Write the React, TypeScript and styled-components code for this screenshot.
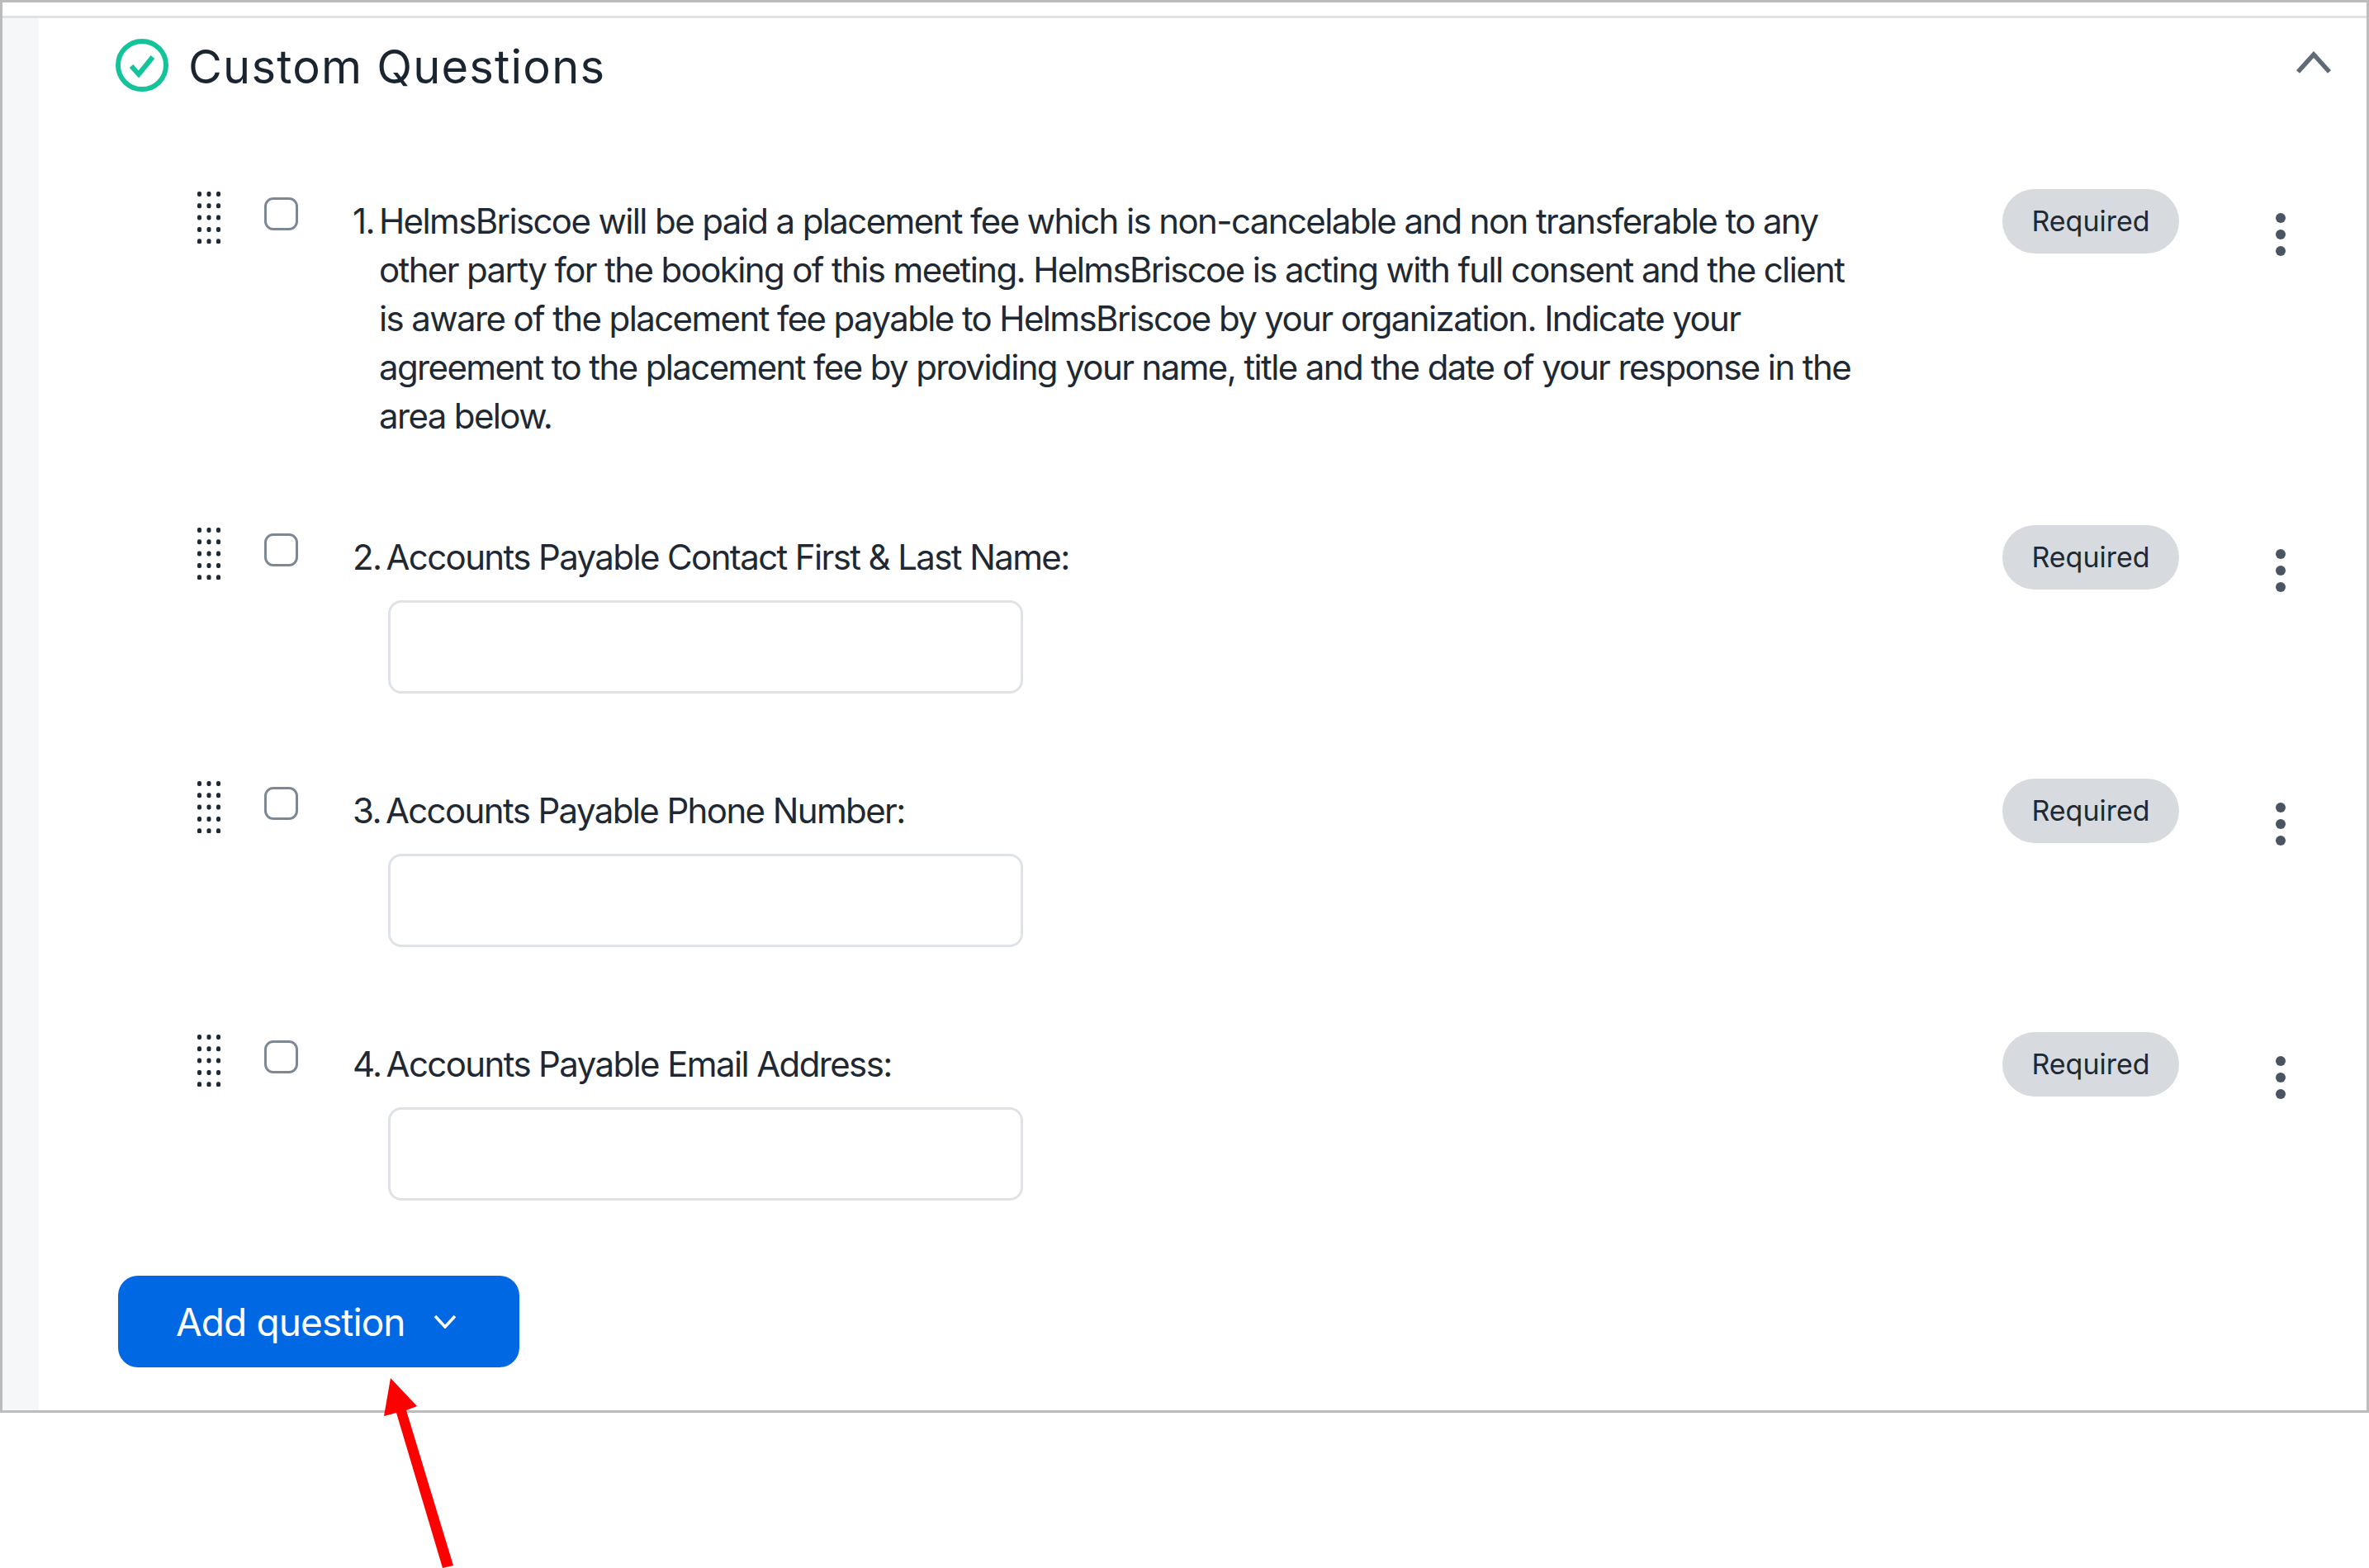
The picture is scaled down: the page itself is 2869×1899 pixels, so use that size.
import React from "react";
import styled, { createGlobalStyle } from "styled-components";

const GlobalStyle = createGlobalStyle`
  html, body {
    margin: 0;
    padding: 0;
    background: #ffffff;
  }
  body {
    font-family: Inter, "Liberation Sans", sans-serif;
  }
`;

const Page = styled.div`
  position: relative;
  width: 2869px;
  height: 1899px;
  overflow: hidden;
  background: #ffffff;
`;

const Frame = styled.section`
  box-sizing: border-box;
  width: 2869px;
  border: 3px solid #bcbcbc;
  background: #ffffff;
`;

const TopBand = styled.div`
  height: 16px;
  border-bottom: 3px solid #dfe3e7;
`;

const Body = styled.div`
  display: flex;
`;

const Strip = styled.div`
  width: 44px;
  flex: none;
  background: #f6f7f9;
`;

const Content = styled.div`
  flex: 1;
  min-width: 0;
  padding-bottom: 52px;
`;

const Header = styled.header`
  display: flex;
  align-items: flex-start;
  padding: 25px 44px 0 93px;
  height: 62px;
  margin-bottom: 120px;
`;

const Title = styled.h2`
  flex: 1;
  margin: 3px 0 0 24px;
  font-size: 56px;
  line-height: 62px;
  font-weight: 400;
  letter-spacing: 1.2px;
  color: #1b2530;
`;

const Chevron = styled.svg`
  width: 44px;
  height: 28px;
  margin-top: 15px;
  margin-right: -2px;
`;

const List = styled.div`
  display: flex;
  flex-direction: column;
  gap: 103px;
  padding-left: 192px;
  padding-right: 98px;
`;

const Row = styled.div`
  display: flex;
  align-items: flex-start;
`;

const Handle = styled.svg`
  width: 28px;
  height: 63px;
  flex: none;
  margin-top: 3px;
`;

const Check = styled.input`
  appearance: none;
  box-sizing: border-box;
  flex: none;
  width: 41px;
  height: 40px;
  margin: 10px 0 0 53px;
  border: 3px solid #7d8894;
  border-radius: 11px;
  background: #ffffff;
`;

const Question = styled.div`
  flex: 1;
  min-width: 0;
  margin: 9px 0 0 66px;
  font-size: 42px;
  line-height: 59px;
  letter-spacing: -1.62px;
  color: #1f2933;
`;

const Label = styled.div`
  display: flex;
  gap: 6px;
  width: 1840px;
`;

const Answer = styled.input`
  display: block;
  box-sizing: border-box;
  width: 769px;
  height: 113px;
  margin: 23px 0 0 43px;
  border: 3px solid #dfe3e7;
  border-radius: 16px;
  background: #ffffff;
`;

const Pill = styled.span`
  flex: none;
  box-sizing: border-box;
  width: 214px;
  height: 78px;
  border-radius: 39px;
  background: #d7dade;
  color: #1f2933;
  font-size: 34px;
  line-height: 78px;
  text-align: center;
`;

const Menu = styled.svg`
  flex: none;
  width: 12px;
  height: 52px;
  margin: 29px 0 0 117px;
`;

const AddButton = styled.button`
  display: flex;
  align-items: center;
  box-sizing: border-box;
  width: 486px;
  height: 111px;
  margin: 91px 0 0 96px;
  padding: 0 0 0 70px;
  border: none;
  border-radius: 24px;
  background: #0068e3;
  color: #ffffff;
  font-family: inherit;
  font-size: 46px;
  letter-spacing: -0.9px;
`;

const ButtonCaret = styled.svg`
  width: 28px;
  height: 17px;
  margin-left: 34px;
`;

const Arrow = styled.svg`
  position: absolute;
  left: 0;
  top: 0;
  width: 2869px;
  height: 1899px;
  pointer-events: none;
`;

interface QuestionItem {
  number: number;
  text: string;
  hasInput: boolean;
}

const questions: QuestionItem[] = [
  {
    number: 1,
    text: "HelmsBriscoe will be paid a placement fee which is non-cancelable and non transferable to any other party for the booking of this meeting. HelmsBriscoe is acting with full consent and the client is aware of the placement fee payable to HelmsBriscoe by your organization. Indicate your agreement to the placement fee by providing your name, title and the date of your response in the area below.",
    hasInput: false,
  },
  { number: 2, text: "Accounts Payable Contact First & Last Name:", hasInput: true },
  { number: 3, text: "Accounts Payable Phone Number:", hasInput: true },
  { number: 4, text: "Accounts Payable Email Address:", hasInput: true },
];

const HandleIcon = () => (
  <Handle viewBox="0 0 28 63">
    {[0, 1, 2, 3, 4].map((r) =>
      [0, 1, 2].map((c) => (
        <rect key={`${r}-${c}`} x={c * 11.5} y={r * 14.3} width="5" height="6" rx="2" fill="#1f2933" />
      ))
    )}
  </Handle>
);

const MenuIcon = () => (
  <Menu viewBox="0 0 12 52">
    <circle cx="6" cy="6" r="6" fill="#4a5561" />
    <circle cx="6" cy="26" r="6" fill="#4a5561" />
    <circle cx="6" cy="46" r="6" fill="#4a5561" />
  </Menu>
);

const App: React.FC = () => {
  return (
    <Page>
      <GlobalStyle />
      <Frame>
        <TopBand />
        <Body>
          <Strip />
          <Content>
            <Header>
              <svg width="64" height="64" viewBox="0 0 64 64">
                <circle cx="32" cy="32" r="29" fill="none" stroke="#14c39a" strokeWidth="6" />
                <path d="M19 33 L28 43 L45 22" fill="none" stroke="#14c39a" strokeWidth="6" />
              </svg>
              <Title>Custom Questions</Title>
              <Chevron viewBox="0 0 44 28">
                <path d="M3 25 L22 4 L41 25" fill="none" stroke="#5f6b76" strokeWidth="5.5" />
              </Chevron>
            </Header>
            <List>
              {questions.map((q) => (
                <Row key={q.number}>
                  <HandleIcon />
                  <Check type="checkbox" />
                  <Question>
                    <Label>
                      <span>{q.number}.</span>
                      <span>{q.text}</span>
                    </Label>
                    {q.hasInput && <Answer type="text" />}
                  </Question>
                  <Pill>Required</Pill>
                  <MenuIcon />
                </Row>
              ))}
            </List>
            <AddButton>
              Add question
              <ButtonCaret viewBox="0 0 28 17">
                <path d="M2 2 L14 15 L26 2" fill="none" stroke="#ffffff" strokeWidth="3.5" />
              </ButtonCaret>
            </AddButton>
          </Content>
        </Body>
      </Frame>
      <Arrow viewBox="0 0 2869 1899">
        <polygon
          points="473,1669 505,1703 492,1708 549,1896 536,1899 480,1711 465,1715"
          fill="#ff0000"
        />
      </Arrow>
    </Page>
  );
};

export default App;
